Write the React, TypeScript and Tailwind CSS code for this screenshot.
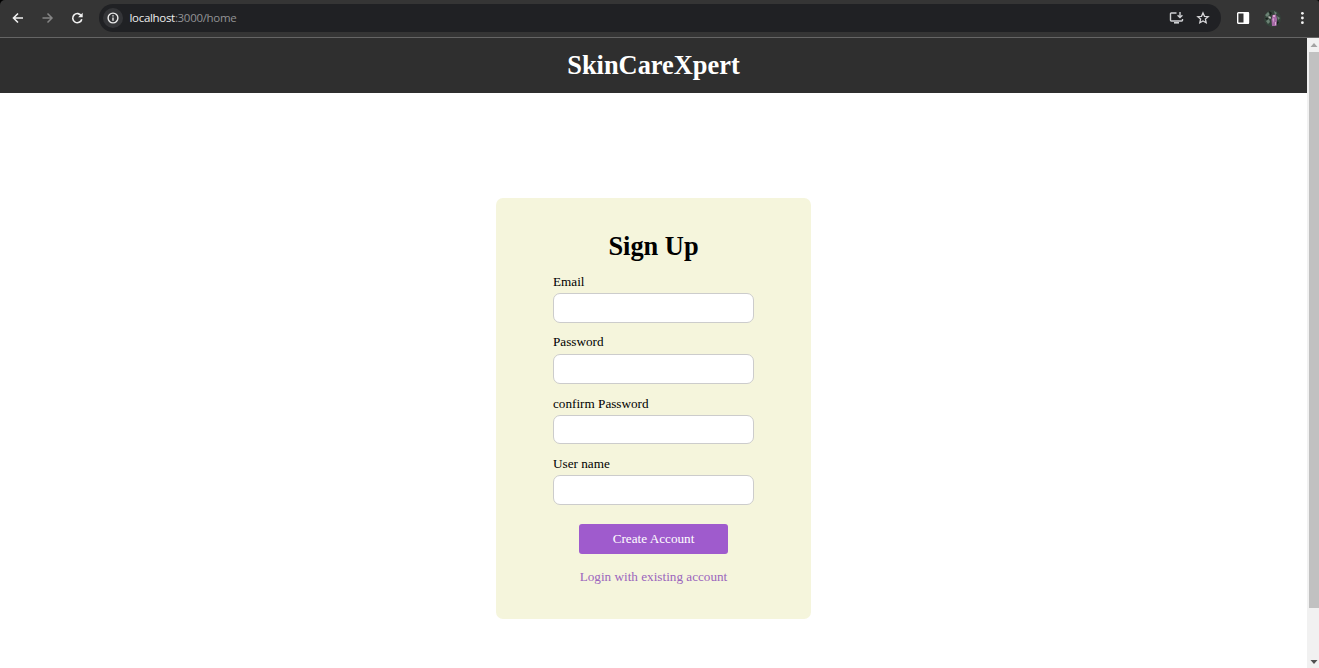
import React from "react";

const fields = [
  { label: "Email", type: "email", height: "h-[30px]", gap: "mb-[11px]", labelGap: "mb-[4px]" },
  { label: "Password", type: "password", height: "h-[30px]", gap: "mb-[12px]", labelGap: "mb-[5px]" },
  { label: "confirm Password", type: "password", height: "h-[29px]", gap: "mb-[12px]", labelGap: "mb-[4px]" },
  { label: "User name", type: "text", height: "h-[30px]", gap: "", labelGap: "mb-[4px]" },
];

function Toolbar() {
  return (
    <div className="h-[38px] shrink-0 bg-black">
      <div className="flex h-full items-center rounded-tl-[5px] rounded-tr-[3px] border-b border-[#656565] bg-[#353535] pb-px pl-[11px] pr-[9px] text-white">
        <svg className="h-[14px] w-[14px]" viewBox="0 0 14 14" fill="none" stroke="#f1f1f1" strokeWidth="1.6">
          <path d="M12 7H3M7 2.5L2.5 7L7 11.5" />
        </svg>
        <svg className="ml-[16px] h-[14px] w-[14px]" viewBox="0 0 14 14" fill="none" stroke="#858585" strokeWidth="1.5">
          <path d="M1.5 7H10.5M6.5 2.5L11 7L6.5 11.5" />
        </svg>
        <svg className="ml-[15px] h-[14px] w-[14px]" viewBox="0 0 14 14">
          <path d="M11.4 5A4.6 4.6 0 1 0 11.8 8.2" fill="none" stroke="#f1f1f1" strokeWidth="1.6" />
          <path d="M12.7 1.7V6.3H8.1Z" fill="#f1f1f1" />
        </svg>
        <div className="ml-[15px] flex h-[28px] w-[1122px] items-center rounded-full bg-[#202124] pl-[4px] pr-[11px]">
          <div className="flex h-[20px] w-[20px] items-center justify-center rounded-full bg-[#343538]">
            <svg className="h-[12px] w-[12px]" viewBox="0 0 12 12" fill="none" stroke="#ececec" strokeWidth="1.4">
              <circle cx="6" cy="6" r="4.9" />
              <path d="M6 5.4V8.7M6 3.2V4.5" />
            </svg>
          </div>
          <div className="ml-[6.5px] flex-1 font-['Open_Sans',sans-serif] text-[11.5px] leading-[16px] tracking-[-0.31px] text-[#929395]">
            <span className="text-[#eeeeee]">localhost</span>:3000/home
          </div>
          <svg className="mr-[12px] h-[14px] w-[15px]" viewBox="0 0 15 14" fill="none" stroke="#cfd0d3" strokeWidth="1.4">
            <path d="M7.5 2H2.2Q1.5 2 1.5 2.7V9.3Q1.5 10 2.2 10H12.8Q13.5 10 13.5 9.3V8" />
            <path d="M5 11.8H10" strokeWidth="1.6" />
            <path d="M11 1V6.2M8.6 4.2L11 6.5L13.4 4.2" />
          </svg>
          <svg className="h-[14px] w-[14px]" viewBox="0 0 14 14" fill="none" stroke="#d6d6d8" strokeWidth="1.3">
            <path d="M7 1.9L8.5 5.3L12.2 5.7L9.4 8.1L10.2 11.8L7 9.9L3.8 11.8L4.6 8.1L1.8 5.7L5.5 5.3Z" />
          </svg>
        </div>
        <svg className="ml-[16px] h-[12px] w-[13px]" viewBox="0 0 13 12">
          <rect x="0.7" y="0.7" width="10.8" height="10.6" rx="0.6" fill="none" stroke="#fff" strokeWidth="1.4" />
          <rect x="6.5" y="0.5" width="5.5" height="11" fill="#fff" />
        </svg>
        <svg className="ml-[14px] h-[17px] w-[17px] rounded-full" viewBox="0 0 17 17">
          <rect width="17" height="17" fill="#34423a" />
          <path d="M1 5L4 2L6 4L3 7ZM10 1L13 3L11 5ZM2 11L5 9L6 12L4 14ZM13 6L16 8L14 10Z" fill="#6b8274" />
          <path d="M5 1L8 3L6 6ZM1 8L4 8L3 10ZM12 11L15 12L13 15Z" fill="#17211b" />
          <path d="M8.5 5L12 4.5L13 9L12.5 16H8L7.5 10Z" fill="#a468a5" />
          <path d="M9 5H11V7H9ZM8.5 9L10 8L9.5 13ZM11 12H12V15H11Z" fill="#d9a9d2" />
          <path d="M4.5 6L7 7L6.5 9L4.5 8Z" fill="#b9bdb6" />
        </svg>
        <svg className="ml-auto h-[14px] w-[14px]" viewBox="0 0 14 14" fill="#f4f4f4">
          <circle cx="6.4" cy="2.3" r="1.4" />
          <circle cx="6.4" cy="7" r="1.4" />
          <circle cx="6.4" cy="11.7" r="1.4" />
        </svg>
      </div>
    </div>
  );
}

function Scrollbar() {
  return (
    <div className="flex w-[12px] shrink-0 flex-col bg-[#f1f1f1] pl-[2px]">
      <div className="flex h-[14px] items-center justify-center">
        <svg className="h-[4px] w-[8px]" viewBox="0 0 8 4">
          <path d="M0.5 4L4 0L7.5 4Z" fill="#a3a3a3" />
        </svg>
      </div>
      <div className="h-[556px] bg-[#c1c1c1]" />
      <div className="mt-auto flex h-[13px] items-center justify-center">
        <svg className="h-[4px] w-[8px]" viewBox="0 0 8 4">
          <path d="M0.5 0L4 4L7.5 0Z" fill="#505050" />
        </svg>
      </div>
    </div>
  );
}

function SignUpCard() {
  return (
    <form className="flex h-[421px] w-[315px] flex-col items-center rounded-[7px] bg-[#f5f5dc] pt-[33px] text-[13.2px] leading-[15px] text-black">
      <h2 className="text-[26.4px] font-bold leading-[30px]">Sign Up</h2>
      <div className="mt-[13px] flex w-[201px] flex-col">
        {fields.map((field) => (
          <label key={field.label} className={`flex flex-col ${field.gap}`}>
            <span className={field.labelGap}>{field.label}</span>
            <input
              type={field.type}
              className={`w-full rounded-[7px] border border-[#cccccc] bg-white px-2 outline-none ${field.height}`}
            />
          </label>
        ))}
      </div>
      <button type="button" className="mt-[19px] h-[30px] w-[149px] rounded-[3px] bg-[#9f5bcd] pb-[2px] text-white">
        Create Account
      </button>
      <a href="#login" className="mt-[15px] text-[#9b65bd]">
        Login with existing account
      </a>
    </form>
  );
}

export default function App() {
  return (
    <div className="flex h-[668px] w-[1319px] flex-col overflow-hidden bg-white font-['Liberation_Serif',serif]">
      <Toolbar />
      <div className="flex flex-1">
        <div className="flex flex-1 flex-col items-center">
          <header className="flex h-[55px] w-full items-center justify-center bg-[#2f2f2f] pb-[2px]">
            <h1 className="text-[26.4px] font-bold leading-[30px] text-white">SkinCareXpert</h1>
          </header>
          <main className="flex w-full flex-1 items-start justify-center pt-[105px]">
            <SignUpCard />
          </main>
        </div>
        <Scrollbar />
      </div>
    </div>
  );
}
